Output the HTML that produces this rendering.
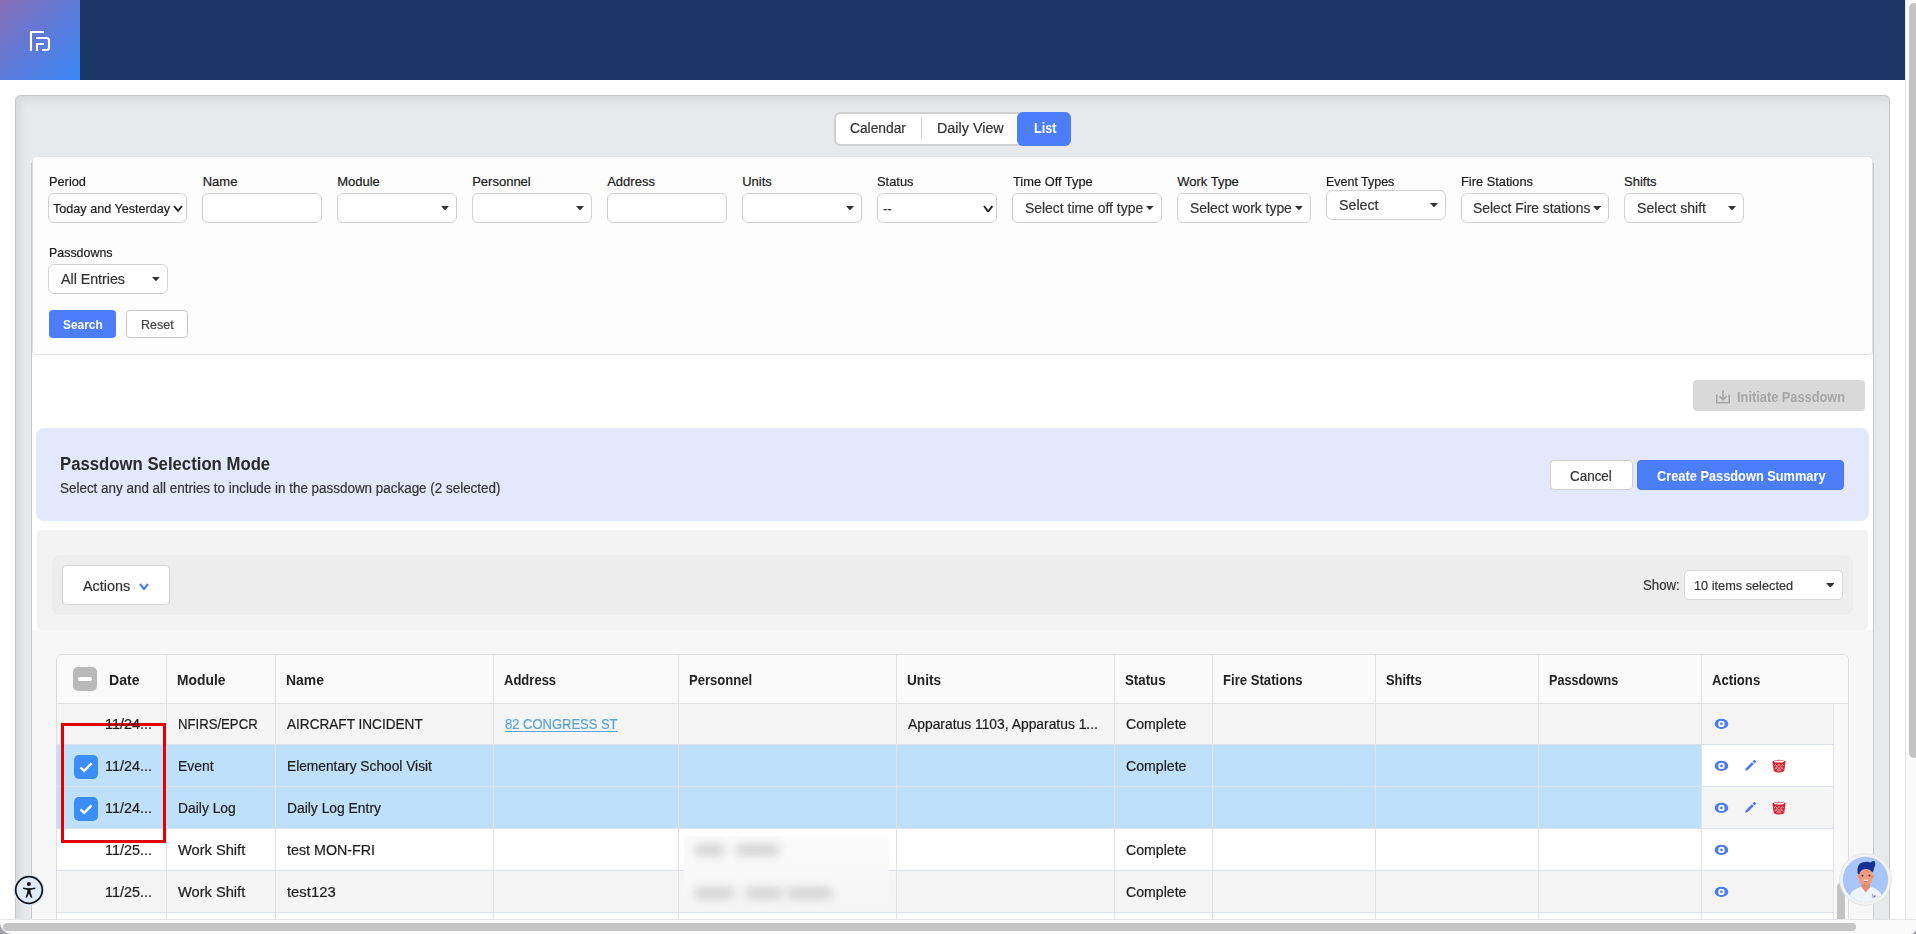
<!DOCTYPE html>
<html><head><meta charset="utf-8"><title>Passdown</title>
<style>
*{box-sizing:border-box;margin:0;padding:0}
html,body{width:1916px;height:934px;overflow:hidden;background:#fff;font-family:"Liberation Sans",sans-serif;color:#222;position:relative}
.a{position:absolute}
.t{position:absolute;white-space:nowrap;line-height:1;transform-origin:0 0}
</style></head><body>

<div class="a" style="left:0px;top:0px;width:1905px;height:80px;background:#1b3665"></div>
<div class="a" style="left:0px;top:0px;width:80px;height:80px;background:linear-gradient(135deg,#8a6fb8 0%,#5d7ad9 50%,#3a88f8 100%)"></div>
<svg class="a" style="left:0;top:0" width="80" height="80" viewBox="0 0 80 80"><g fill="none" stroke="#fff" stroke-width="2.1">
<path d="M31 51V32H44"/><path d="M36 38H46.5Q49 38 49 40.5V47.5Q49 50 46.5 50H42"/><path d="M37 51V44H44"/></g></svg>
<div class="a" style="left:15px;top:95px;width:1875px;height:905px;background:#e8e9ed;border:1px solid #c6c6c6;border-radius:5px;box-shadow:inset 4px 4px 7px rgba(0,0,0,.07)"></div>
<div class="a" style="left:31px;top:163px;width:1843px;height:837px;background:#fff;border-left:1px solid #c9c9c9;border-right:1px solid #c9c9c9"></div>
<div class="a" style="left:834px;top:112px;width:237px;height:34px;background:#fff;border:2px solid #d0d0d0;border-radius:6px"></div>
<div class="a" style="left:921px;top:117px;width:1px;height:23px;background:#d4d4d4"></div>
<div class="a" style="left:1017px;top:112px;width:54px;height:34px;background:#4d7efa;border-radius:6px"></div>
<div class="a" style="left:32px;top:156px;width:1841px;height:199px;background:#fdfdfd;border:1px solid #e0e0e0;border-radius:4px"></div>
<div class="a" style="left:48px;top:193px;width:139px;height:30px;background:#fff;border:1px solid #d0d0d0;border-radius:6px"></div>
<svg class="a" style="left:172.8px;top:204.8px" width="10.0" height="6.799999999999983" viewBox="-1 -1 10.0 6.799999999999983"><path d="M0 0L4.0 4.799999999999983L8.0 0" fill="none" stroke="#222" stroke-width="1.9"/></svg>
<div class="a" style="left:202px;top:193px;width:120px;height:30px;background:#fff;border:1px solid #d0d0d0;border-radius:6px"></div>
<div class="a" style="left:337px;top:193px;width:120px;height:30px;background:#fff;border:1px solid #d0d0d0;border-radius:6px"></div>
<svg class="a" style="left:441px;top:205.5px" width="8" height="4.4" viewBox="0 0 8 4.4"><path d="M0 0H8L4.0 4.4Z" fill="#333"/></svg>
<div class="a" style="left:472px;top:193px;width:120px;height:30px;background:#fff;border:1px solid #d0d0d0;border-radius:6px"></div>
<svg class="a" style="left:576px;top:205.5px" width="8" height="4.4" viewBox="0 0 8 4.4"><path d="M0 0H8L4.0 4.4Z" fill="#333"/></svg>
<div class="a" style="left:607px;top:193px;width:120px;height:30px;background:#fff;border:1px solid #d0d0d0;border-radius:6px"></div>
<div class="a" style="left:742px;top:193px;width:120px;height:30px;background:#fff;border:1px solid #d0d0d0;border-radius:6px"></div>
<svg class="a" style="left:846px;top:205.5px" width="8" height="4.4" viewBox="0 0 8 4.4"><path d="M0 0H8L4.0 4.4Z" fill="#333"/></svg>
<div class="a" style="left:877px;top:193px;width:120px;height:30px;background:#fff;border:1px solid #d0d0d0;border-radius:6px"></div>
<svg class="a" style="left:983px;top:204.6px" width="10.299999999999955" height="7.599999999999994" viewBox="-1 -1 10.299999999999955 7.599999999999994"><path d="M0 0L4.149999999999977 5.599999999999994L8.299999999999955 0" fill="none" stroke="#222" stroke-width="1.9"/></svg>
<div class="a" style="left:1012px;top:193px;width:150px;height:30px;background:#fff;border:1px solid #d0d0d0;border-radius:6px"></div>
<svg class="a" style="left:1146.4px;top:205.71000000000004px" width="7.599999999999909" height="4.17999999999995" viewBox="0 0 7.599999999999909 4.17999999999995"><path d="M0 0H7.599999999999909L3.7999999999999545 4.17999999999995Z" fill="#333"/></svg>
<div class="a" style="left:1177px;top:193px;width:134px;height:30px;background:#fff;border:1px solid #d0d0d0;border-radius:6px"></div>
<svg class="a" style="left:1295.4px;top:205.62750000000005px" width="7.899999999999864" height="4.344999999999925" viewBox="0 0 7.899999999999864 4.344999999999925"><path d="M0 0H7.899999999999864L3.949999999999932 4.344999999999925Z" fill="#333"/></svg>
<div class="a" style="left:1326px;top:190px;width:120px;height:30px;background:#fff;border:1px solid #d0d0d0;border-radius:6px"></div>
<svg class="a" style="left:1430px;top:202.60000000000002px" width="8" height="4.4" viewBox="0 0 8 4.4"><path d="M0 0H8L4.0 4.4Z" fill="#333"/></svg>
<div class="a" style="left:1461px;top:193px;width:148px;height:30px;background:#fff;border:1px solid #d0d0d0;border-radius:6px"></div>
<svg class="a" style="left:1592.7px;top:205.545px" width="8.200000000000045" height="4.5100000000000255" viewBox="0 0 8.200000000000045 4.5100000000000255"><path d="M0 0H8.200000000000045L4.100000000000023 4.5100000000000255Z" fill="#333"/></svg>
<div class="a" style="left:1624px;top:193px;width:120px;height:30px;background:#fff;border:1px solid #d0d0d0;border-radius:6px"></div>
<svg class="a" style="left:1727.5px;top:205.60000000000002px" width="8.0" height="4.4" viewBox="0 0 8.0 4.4"><path d="M0 0H8.0L4.0 4.4Z" fill="#333"/></svg>
<div class="a" style="left:48px;top:264px;width:120px;height:30px;background:#fff;border:1px solid #d0d0d0;border-radius:6px"></div>
<svg class="a" style="left:152px;top:276.65500000000003px" width="7.800000000000011" height="4.290000000000006" viewBox="0 0 7.800000000000011 4.290000000000006"><path d="M0 0H7.800000000000011L3.9000000000000057 4.290000000000006Z" fill="#333"/></svg>
<div class="a" style="left:49px;top:310px;width:67px;height:28px;background:#4d7efa;border-radius:4px"></div>
<div class="a" style="left:126px;top:310px;width:62px;height:28px;background:#fff;border:1px solid #c8c8c8;border-radius:4px"></div>
<div class="a" style="left:1693px;top:380px;width:172px;height:31px;background:#d9d9d9;border-radius:4px"></div>
<svg class="a" style="left:1714px;top:389px" width="18" height="16" viewBox="0 0 18 16"><g fill="none" stroke="#a6a6a6" stroke-width="1.6"><path d="M2.8 5.5V13.8H15.2V5.5"/><path d="M9 1.2V10.5"/><path d="M5.6 7.4L9 10.6L12.4 7.4"/></g></svg>
<div class="a" style="left:36px;top:428px;width:1833px;height:93px;background:#e4e8fc;border-radius:8px"></div>
<div class="a" style="left:1550px;top:460px;width:83px;height:30px;background:#fff;border:1px solid #cfcfcf;border-radius:4px"></div>
<div class="a" style="left:1637px;top:460px;width:207px;height:30px;background:#4d7efa;border-radius:4px;border:1px solid #4a78ee"></div>
<div class="a" style="left:37px;top:530px;width:1831px;height:100px;background:#f3f3f3;border-radius:4px"></div>
<div class="a" style="left:52px;top:555px;width:1801px;height:60px;background:#ededed;border-radius:8px"></div>
<div class="a" style="left:62px;top:565px;width:108px;height:40px;background:#fff;border:1px solid #d4d4d4;border-radius:4px"></div>
<svg class="a" style="left:138.5px;top:582.6px" width="10.0" height="7.0" viewBox="-1 -1 10.0 7.0"><path d="M0 0L4.0 5.0L8.0 0" fill="none" stroke="#4d7efa" stroke-width="2.2"/></svg>
<div class="a" style="left:1684px;top:570px;width:159px;height:30px;background:#fff;border:1px solid #d8d8d8;border-radius:5px"></div>
<svg class="a" style="left:1825.5px;top:582.6075px" width="8.700000000000045" height="4.785000000000025" viewBox="0 0 8.700000000000045 4.785000000000025"><path d="M0 0H8.700000000000045L4.350000000000023 4.785000000000025Z" fill="#333"/></svg>
<div class="a" style="left:32px;top:630px;width:1841px;height:370px;background:#f7f7f7"></div>
<div class="a" style="left:56px;top:654px;width:1793px;height:346px;background:#fff;border:1px solid #dedede;border-radius:6px 6px 0 0"></div>
<div class="a" style="left:57px;top:655px;width:1791px;height:48px;background:#fafafa;border-radius:5px 5px 0 0"></div>
<div class="a" style="left:57px;top:703px;width:1791px;height:1px;background:#e2e2e2"></div>
<div class="a" style="left:57px;top:704px;width:1645px;height:40px;background:#f5f5f5"></div>
<div class="a" style="left:1702px;top:704px;width:131px;height:40px;background:#f5f5f5"></div>
<div class="a" style="left:57px;top:745px;width:1645px;height:41px;background:#bee0fa"></div>
<div class="a" style="left:1702px;top:745px;width:131px;height:41px;background:#ffffff"></div>
<div class="a" style="left:57px;top:744px;width:1776px;height:1px;background:#dbe2ed"></div>
<div class="a" style="left:57px;top:787px;width:1645px;height:41px;background:#bee0fa"></div>
<div class="a" style="left:1702px;top:787px;width:131px;height:41px;background:#f5f5f5"></div>
<div class="a" style="left:57px;top:786px;width:1776px;height:1px;background:#dbe2ed"></div>
<div class="a" style="left:57px;top:829px;width:1645px;height:41px;background:#ffffff"></div>
<div class="a" style="left:1702px;top:829px;width:131px;height:41px;background:#ffffff"></div>
<div class="a" style="left:57px;top:828px;width:1776px;height:1px;background:#dbe2ed"></div>
<div class="a" style="left:57px;top:871px;width:1645px;height:41px;background:#f5f5f5"></div>
<div class="a" style="left:1702px;top:871px;width:131px;height:41px;background:#f5f5f5"></div>
<div class="a" style="left:57px;top:870px;width:1776px;height:1px;background:#dbe2ed"></div>
<div class="a" style="left:57px;top:913px;width:1645px;height:47px;background:#ffffff"></div>
<div class="a" style="left:1702px;top:913px;width:131px;height:47px;background:#ffffff"></div>
<div class="a" style="left:57px;top:912px;width:1776px;height:1px;background:#dbe2ed"></div>
<div class="a" style="left:166px;top:655px;width:1px;height:345px;background:#e2e2e2"></div>
<div class="a" style="left:275px;top:655px;width:1px;height:345px;background:#e2e2e2"></div>
<div class="a" style="left:493px;top:655px;width:1px;height:345px;background:#e2e2e2"></div>
<div class="a" style="left:678px;top:655px;width:1px;height:345px;background:#e2e2e2"></div>
<div class="a" style="left:896px;top:655px;width:1px;height:345px;background:#e2e2e2"></div>
<div class="a" style="left:1114px;top:655px;width:1px;height:345px;background:#e2e2e2"></div>
<div class="a" style="left:1212px;top:655px;width:1px;height:345px;background:#e2e2e2"></div>
<div class="a" style="left:1375px;top:655px;width:1px;height:345px;background:#e2e2e2"></div>
<div class="a" style="left:1538px;top:655px;width:1px;height:345px;background:#e2e2e2"></div>
<div class="a" style="left:1701px;top:655px;width:1px;height:345px;background:#e2e2e2"></div>
<div class="a" style="left:1833px;top:704px;width:15px;height:296px;background:#f9f9f9;border-left:1px solid #e6e6e6"></div>
<div class="a" style="left:1837px;top:883px;width:8px;height:117px;background:#c3c3c3;border-radius:4px 4px 0 0"></div>
<div class="a" style="left:73px;top:667px;width:24px;height:24px;background:#b9b9b9;border-radius:5px"></div>
<div class="a" style="left:78px;top:677px;width:14px;height:4px;background:#fff;border-radius:2px"></div>
<div class="a" style="left:74px;top:755px;width:24px;height:24px;background:#3b8ef5;border-radius:5px"></div>
<svg class="a" style="left:74px;top:755px" width="24" height="24" viewBox="0 0 24 24"><path d="M6.5 12.3L10.2 15.8L17.5 8.3" fill="none" stroke="#fff" stroke-width="2.4"/></svg>
<div class="a" style="left:74px;top:797px;width:24px;height:24px;background:#3b8ef5;border-radius:5px"></div>
<svg class="a" style="left:74px;top:797px" width="24" height="24" viewBox="0 0 24 24"><path d="M6.5 12.3L10.2 15.8L17.5 8.3" fill="none" stroke="#fff" stroke-width="2.4"/></svg>
<div class="a" style="left:684px;top:836px;width:205px;height:69px;background:linear-gradient(#fbfbfb,#f6f6f6)"></div>
<div class="a" style="left:694px;top:844px;width:31px;height:12px;background:#d4d4d4;border-radius:6px;filter:blur(5px)"></div>
<div class="a" style="left:735px;top:844px;width:45px;height:12px;background:#d4d4d4;border-radius:6px;filter:blur(5px)"></div>
<div class="a" style="left:694px;top:886.7px;width:41px;height:12px;background:#d4d4d4;border-radius:6px;filter:blur(5px)"></div>
<div class="a" style="left:745px;top:886.7px;width:38px;height:12px;background:#d4d4d4;border-radius:6px;filter:blur(5px)"></div>
<div class="a" style="left:786px;top:886.7px;width:47px;height:12px;background:#d4d4d4;border-radius:6px;filter:blur(5px)"></div>
<svg class="a" style="left:1714px;top:718.2px" width="15" height="12" viewBox="0 0 15 12"><ellipse cx="7.45" cy="5.9" rx="6.8" ry="5.1" fill="#4a7af5"/><circle cx="7.45" cy="5.9" r="3.2" fill="#fff"/><circle cx="7.45" cy="5.9" r="1.35" fill="#4a7af5"/></svg>
<svg class="a" style="left:1714px;top:760.2px" width="15" height="12" viewBox="0 0 15 12"><ellipse cx="7.45" cy="5.9" rx="6.8" ry="5.1" fill="#4a7af5"/><circle cx="7.45" cy="5.9" r="3.2" fill="#fff"/><circle cx="7.45" cy="5.9" r="1.35" fill="#4a7af5"/></svg>
<svg class="a" style="left:1744px;top:760.2px" width="13" height="12" viewBox="0 0 13 12"><path d="M1.2 10.8L1.9 8.2L7.9 2.2L9.8 4.1L3.8 10.1Z" fill="#4a7af5"/><path d="M8.6 1.5L10 0.1Q10.5 -0.3 11 0.2L12 1.2Q12.4 1.7 12 2.1L10.5 3.4Z" fill="#4a7af5"/></svg>
<svg class="a" style="left:1772px;top:759.2px" width="14" height="14" viewBox="0 0 14 14"><path d="M0.4 2.2Q7 -0.8 13.6 2.2L12.2 12.2Q7 14.6 1.8 12.2Z" fill="#d9202f"/><ellipse cx="7" cy="2.5" rx="5" ry="1.05" fill="#fff"/><g stroke="#f3b9be" stroke-width=".75" fill="none"><path d="M3 5L9.5 12.2M6.5 5L11.5 10.5M10 5L11.8 7M3.8 8.5L7 12.2M11 5L4.5 12.2M7.5 5L2.6 10.4M4 5L2.2 7M10.2 8.5L7 12.2"/></g></svg>
<svg class="a" style="left:1714px;top:802.2px" width="15" height="12" viewBox="0 0 15 12"><ellipse cx="7.45" cy="5.9" rx="6.8" ry="5.1" fill="#4a7af5"/><circle cx="7.45" cy="5.9" r="3.2" fill="#fff"/><circle cx="7.45" cy="5.9" r="1.35" fill="#4a7af5"/></svg>
<svg class="a" style="left:1744px;top:802.2px" width="13" height="12" viewBox="0 0 13 12"><path d="M1.2 10.8L1.9 8.2L7.9 2.2L9.8 4.1L3.8 10.1Z" fill="#4a7af5"/><path d="M8.6 1.5L10 0.1Q10.5 -0.3 11 0.2L12 1.2Q12.4 1.7 12 2.1L10.5 3.4Z" fill="#4a7af5"/></svg>
<svg class="a" style="left:1772px;top:801.2px" width="14" height="14" viewBox="0 0 14 14"><path d="M0.4 2.2Q7 -0.8 13.6 2.2L12.2 12.2Q7 14.6 1.8 12.2Z" fill="#d9202f"/><ellipse cx="7" cy="2.5" rx="5" ry="1.05" fill="#fff"/><g stroke="#f3b9be" stroke-width=".75" fill="none"><path d="M3 5L9.5 12.2M6.5 5L11.5 10.5M10 5L11.8 7M3.8 8.5L7 12.2M11 5L4.5 12.2M7.5 5L2.6 10.4M4 5L2.2 7M10.2 8.5L7 12.2"/></g></svg>
<svg class="a" style="left:1714px;top:844.2px" width="15" height="12" viewBox="0 0 15 12"><ellipse cx="7.45" cy="5.9" rx="6.8" ry="5.1" fill="#4a7af5"/><circle cx="7.45" cy="5.9" r="3.2" fill="#fff"/><circle cx="7.45" cy="5.9" r="1.35" fill="#4a7af5"/></svg>
<svg class="a" style="left:1714px;top:886.2px" width="15" height="12" viewBox="0 0 15 12"><ellipse cx="7.45" cy="5.9" rx="6.8" ry="5.1" fill="#4a7af5"/><circle cx="7.45" cy="5.9" r="3.2" fill="#fff"/><circle cx="7.45" cy="5.9" r="1.35" fill="#4a7af5"/></svg>
<div class="a" style="left:61px;top:723px;width:105px;height:120px;border:3px solid #e30000"></div>
<div class="a" style="left:0px;top:922px;width:14px;height:12px;background:#a3a3a8"></div>
<div class="a" style="left:1904px;top:926px;width:12px;height:8px;background:#8f8f94"></div>
<div class="a" style="left:0px;top:919px;width:1916px;height:15px;background:#fafafa;border-top:1px solid #e4e4e4;border-bottom-left-radius:12px;border-bottom-right-radius:5px"></div>
<div class="a" style="left:3px;top:923px;width:1853px;height:8px;background:#c4c4c4;border-radius:4px"></div>
<div class="a" style="left:1905px;top:0px;width:11px;height:919px;background:#fafafa;border-left:1px solid #e6e6e6"></div>
<div class="a" style="left:1909px;top:3px;width:10px;height:755px;background:#c4c4c4;border-radius:5px"></div>
<svg class="a" style="left:13px;top:874px" width="32" height="32" viewBox="0 0 32 32">
<circle cx="16" cy="16" r="15.6" fill="#dfeafc"/><circle cx="16" cy="16" r="13.3" fill="#dfeafc" stroke="#151515" stroke-width="1.7"/>
<circle cx="15.9" cy="9.9" r="2" fill="#151515"/>
<path d="M10 13.6Q16 14.8 22.3 13.6L22.3 14.9Q18.5 15.6 17.6 15.9L17.6 18.2L19.4 23.4L17.9 23.8L15.9 19.4L14 23.8L12.5 23.4L14.3 18.2L14.3 15.9Q13.4 15.6 10 14.9Z" fill="#151515"/>
</svg>
<svg class="a" style="left:1839px;top:853px" width="53" height="53" viewBox="0 0 53 53">
<defs><clipPath id="cp"><circle cx="26.5" cy="26.5" r="22.7"/></clipPath></defs>
<circle cx="26.5" cy="26.5" r="25.9" fill="#f3f3f3" stroke="#e0e0e0" stroke-width="0.8"/>
<circle cx="26.5" cy="26.5" r="22.7" fill="#a9c6fb"/>
<g clip-path="url(#cp)">
<path d="M8 53Q9 39 18 35.5L22.5 33.5L27 39L31.5 33.5L36 35.5Q44 39 45 53Z" fill="#eef4fe"/>
<path d="M22.5 29H31V34L26.8 39.5L22.5 34Z" fill="#e88a6f"/>
<ellipse cx="19.8" cy="23.5" rx="1.3" ry="2" fill="#ec9478"/><ellipse cx="33.6" cy="23.5" rx="1.3" ry="2" fill="#ec9478"/>
<path d="M19.8 19Q20 15.5 26.5 15.5Q33.3 15.5 33.3 19V26Q33.3 31.5 26.5 31.5Q19.8 31.5 19.8 26Z" fill="#f09b7f"/>
<path d="M18.6 20.5Q17.2 11 24 9.3Q28 8.2 31.5 9.4Q33.5 7.2 35.6 8.2Q37.2 11 35.2 14.5Q34.8 18 33.3 19.5Q31.5 15.6 26 16Q21.5 16.3 20.2 21.5Z" fill="#143095"/>
<rect x="22.6" y="21.8" width="1.7" height="1.6" fill="#3a2a2a"/><rect x="29.6" y="21.8" width="1.7" height="1.6" fill="#3a2a2a"/>
<path d="M24.6 27.3H29" stroke="#fff" stroke-width="1.1"/><path d="M25 28.6H28.6" stroke="#d9534f" stroke-width=".8"/>
<path d="M33.5 41.5Q32.8 44 34.5 45" stroke="#e57373" stroke-width=".9" fill="none"/><rect x="34.6" y="42.5" width="1.8" height="1.8" fill="#3a6ee8"/>
</g></svg>
<div class="t" id="t0" style="left:850px;top:121.25px;font-size:14px;font-weight:400;color:#333;transform:scaleX(0.9846);-webkit-text-stroke:0.2px #333;">Calendar</div>
<div class="t" id="t1" style="left:937px;top:121.25px;font-size:14px;font-weight:400;color:#333;transform:scaleX(1.0249);-webkit-text-stroke:0.2px #333;">Daily View</div>
<div class="t" id="t2" style="left:1033.5px;top:121.25px;font-size:14px;font-weight:700;color:#fff;transform:scaleX(0.9048);">List</div>
<div class="t" id="t3" style="left:48.7px;top:175.00px;font-size:13px;font-weight:400;color:#1a1a1a;transform:scaleX(0.9826);-webkit-text-stroke:0.2px #1a1a1a;">Period</div>
<div class="t" id="t4" style="left:202.7px;top:175.00px;font-size:13px;font-weight:400;color:#1a1a1a;-webkit-text-stroke:0.2px #1a1a1a;">Name</div>
<div class="t" id="t5" style="left:337.2px;top:175.00px;font-size:13px;font-weight:400;color:#1a1a1a;-webkit-text-stroke:0.2px #1a1a1a;">Module</div>
<div class="t" id="t6" style="left:472.2px;top:175.00px;font-size:13px;font-weight:400;color:#1a1a1a;-webkit-text-stroke:0.2px #1a1a1a;">Personnel</div>
<div class="t" id="t7" style="left:607.2px;top:175.00px;font-size:13px;font-weight:400;color:#1a1a1a;-webkit-text-stroke:0.2px #1a1a1a;">Address</div>
<div class="t" id="t8" style="left:742.2px;top:175.00px;font-size:13px;font-weight:400;color:#1a1a1a;-webkit-text-stroke:0.2px #1a1a1a;">Units</div>
<div class="t" id="t9" style="left:877.2px;top:175.00px;font-size:13px;font-weight:400;color:#1a1a1a;transform:scaleX(0.9903);-webkit-text-stroke:0.2px #1a1a1a;">Status</div>
<div class="t" id="t10" style="left:1012.6px;top:175.00px;font-size:13px;font-weight:400;color:#1a1a1a;transform:scaleX(0.9881);-webkit-text-stroke:0.2px #1a1a1a;">Time Off Type</div>
<div class="t" id="t11" style="left:1177.2px;top:175.00px;font-size:13px;font-weight:400;color:#1a1a1a;-webkit-text-stroke:0.2px #1a1a1a;">Work Type</div>
<div class="t" id="t12" style="left:1326.4px;top:175.00px;font-size:13px;font-weight:400;color:#1a1a1a;transform:scaleX(0.9583);-webkit-text-stroke:0.2px #1a1a1a;">Event Types</div>
<div class="t" id="t13" style="left:1461.3px;top:175.00px;font-size:13px;font-weight:400;color:#1a1a1a;transform:scaleX(0.9868);-webkit-text-stroke:0.2px #1a1a1a;">Fire Stations</div>
<div class="t" id="t14" style="left:1624px;top:175.00px;font-size:13px;font-weight:400;color:#1a1a1a;-webkit-text-stroke:0.2px #1a1a1a;">Shifts</div>
<div class="t" id="t15" style="left:53px;top:201.80px;font-size:13px;font-weight:400;color:#1e1e1e;transform:scaleX(0.9706);-webkit-text-stroke:0.2px #1e1e1e;">Today and Yesterday</div>
<div class="t" id="t16" style="left:883px;top:201.80px;font-size:13px;font-weight:400;color:#333;-webkit-text-stroke:0.2px #333;">--</div>
<div class="t" id="t17" style="left:1025px;top:201.45px;font-size:14px;font-weight:400;color:#333;transform:scaleX(0.9943);-webkit-text-stroke:0.2px #333;">Select time off type</div>
<div class="t" id="t18" style="left:1190px;top:201.45px;font-size:14px;font-weight:400;color:#333;transform:scaleX(0.9915);-webkit-text-stroke:0.2px #333;">Select work type</div>
<div class="t" id="t19" style="left:1339px;top:198.25px;font-size:14px;font-weight:400;color:#333;transform:scaleX(1.0159);-webkit-text-stroke:0.2px #333;">Select</div>
<div class="t" id="t20" style="left:1473.2px;top:201.45px;font-size:14px;font-weight:400;color:#333;transform:scaleX(0.9859);-webkit-text-stroke:0.2px #333;">Select Fire stations</div>
<div class="t" id="t21" style="left:1636.7px;top:201.45px;font-size:14px;font-weight:400;color:#333;transform:scaleX(1.0076);-webkit-text-stroke:0.2px #333;">Select shift</div>
<div class="t" id="t22" style="left:48.5px;top:245.90px;font-size:13px;font-weight:400;color:#1a1a1a;transform:scaleX(0.9552);-webkit-text-stroke:0.2px #1a1a1a;">Passdowns</div>
<div class="t" id="t23" style="left:60.8px;top:272.45px;font-size:14px;font-weight:400;color:#333;transform:scaleX(1.0146);-webkit-text-stroke:0.2px #333;">All Entries</div>
<div class="t" id="t24" style="left:63px;top:317.80px;font-size:13px;font-weight:700;color:#fff;transform:scaleX(0.9172);">Search</div>
<div class="t" id="t25" style="left:141.2px;top:317.80px;font-size:13px;font-weight:400;color:#444;transform:scaleX(0.9600);-webkit-text-stroke:0.2px #444;">Reset</div>
<div class="t" id="t26" style="left:1736.5px;top:390.05px;font-size:14px;font-weight:700;color:#a6a6a6;transform:scaleX(0.9146);">Initiate Passdown</div>
<div class="t" id="t27" style="left:60.2px;top:454.96px;font-size:18px;font-weight:700;color:#2a2a2a;transform:scaleX(0.9298);">Passdown Selection Mode</div>
<div class="t" id="t28" style="left:60.2px;top:480.95px;font-size:14px;font-weight:400;color:#333;transform:scaleX(0.9593);-webkit-text-stroke:0.2px #333;">Select any and all entries to include in the passdown package (2 selected)</div>
<div class="t" id="t29" style="left:1570.1px;top:469.45px;font-size:14px;font-weight:400;color:#333;transform:scaleX(0.9595);-webkit-text-stroke:0.2px #333;">Cancel</div>
<div class="t" id="t30" style="left:1656.8px;top:469.45px;font-size:14px;font-weight:700;color:#fff;transform:scaleX(0.9142);">Create Passdown Summary</div>
<div class="t" id="t31" style="left:83.2px;top:578.95px;font-size:14px;font-weight:400;color:#333;transform:scaleX(1.0287);-webkit-text-stroke:0.2px #333;">Actions</div>
<div class="t" id="t32" style="left:1643px;top:578.15px;font-size:14px;font-weight:400;color:#333;transform:scaleX(0.9441);-webkit-text-stroke:0.2px #333;">Show:</div>
<div class="t" id="t33" style="left:1693.8px;top:579.00px;font-size:13px;font-weight:400;color:#333;transform:scaleX(0.9796);-webkit-text-stroke:0.2px #333;">10 items selected</div>
<div class="t" id="t34" style="left:109.3px;top:672.10px;font-size:15px;font-weight:700;color:#222;transform:scaleX(0.9394);">Date</div>
<div class="t" id="t35" style="left:177.2px;top:672.10px;font-size:15px;font-weight:700;color:#222;transform:scaleX(0.9226);">Module</div>
<div class="t" id="t36" style="left:286.2px;top:672.10px;font-size:15px;font-weight:700;color:#222;transform:scaleX(0.9268);">Name</div>
<div class="t" id="t37" style="left:504.4px;top:672.10px;font-size:15px;font-weight:700;color:#222;transform:scaleX(0.8683);">Address</div>
<div class="t" id="t38" style="left:689.1px;top:672.10px;font-size:15px;font-weight:700;color:#222;transform:scaleX(0.8712);">Personnel</div>
<div class="t" id="t39" style="left:907px;top:672.10px;font-size:15px;font-weight:700;color:#222;transform:scaleX(0.9105);">Units</div>
<div class="t" id="t40" style="left:1125.3px;top:672.10px;font-size:15px;font-weight:700;color:#222;transform:scaleX(0.8848);">Status</div>
<div class="t" id="t41" style="left:1223.2px;top:672.10px;font-size:15px;font-weight:700;color:#222;transform:scaleX(0.8747);">Fire Stations</div>
<div class="t" id="t42" style="left:1386.3px;top:672.10px;font-size:15px;font-weight:700;color:#222;transform:scaleX(0.8595);">Shifts</div>
<div class="t" id="t43" style="left:1549.4px;top:672.10px;font-size:15px;font-weight:700;color:#222;transform:scaleX(0.8386);">Passdowns</div>
<div class="t" id="t44" style="left:1712.4px;top:672.10px;font-size:15px;font-weight:700;color:#222;transform:scaleX(0.8764);">Actions</div>
<div class="t" id="t45" style="left:105.1px;top:717.25px;font-size:14px;font-weight:400;color:#1c1c1c;transform:scaleX(1.0287);-webkit-text-stroke:0.2px #1c1c1c;">11/24...</div>
<div class="t" id="t46" style="left:178.3px;top:717.25px;font-size:14px;font-weight:400;color:#1c1c1c;transform:scaleX(0.9391);-webkit-text-stroke:0.2px #1c1c1c;">NFIRS/EPCR</div>
<div class="t" id="t47" style="left:287px;top:717.25px;font-size:14px;font-weight:400;color:#1c1c1c;transform:scaleX(0.9709);-webkit-text-stroke:0.2px #1c1c1c;">AIRCRAFT INCIDENT</div>
<div class="t" id="t48" style="left:504.9px;top:717.25px;font-size:14px;font-weight:400;color:#5ba2d9;transform:scaleX(0.9274);-webkit-text-stroke:0.2px #5ba2d9;text-decoration:underline;text-underline-offset:2px">82 CONGRESS ST</div>
<div class="t" id="t49" style="left:908px;top:717.25px;font-size:14px;font-weight:400;color:#1c1c1c;transform:scaleX(0.9892);-webkit-text-stroke:0.2px #1c1c1c;">Apparatus 1103, Apparatus 1...</div>
<div class="t" id="t50" style="left:1126.3px;top:717.25px;font-size:14px;font-weight:400;color:#1c1c1c;transform:scaleX(1.0087);-webkit-text-stroke:0.2px #1c1c1c;">Complete</div>
<div class="t" id="t51" style="left:105.1px;top:759.25px;font-size:14px;font-weight:400;color:#1c1c1c;transform:scaleX(1.0287);-webkit-text-stroke:0.2px #1c1c1c;">11/24...</div>
<div class="t" id="t52" style="left:178.3px;top:759.25px;font-size:14px;font-weight:400;color:#1c1c1c;transform:scaleX(0.9922);-webkit-text-stroke:0.2px #1c1c1c;">Event</div>
<div class="t" id="t53" style="left:287px;top:759.25px;font-size:14px;font-weight:400;color:#1c1c1c;transform:scaleX(0.9819);-webkit-text-stroke:0.2px #1c1c1c;">Elementary School Visit</div>
<div class="t" id="t54" style="left:1126.3px;top:759.25px;font-size:14px;font-weight:400;color:#1c1c1c;transform:scaleX(1.0087);-webkit-text-stroke:0.2px #1c1c1c;">Complete</div>
<div class="t" id="t55" style="left:105.1px;top:801.25px;font-size:14px;font-weight:400;color:#1c1c1c;transform:scaleX(1.0287);-webkit-text-stroke:0.2px #1c1c1c;">11/24...</div>
<div class="t" id="t56" style="left:178.3px;top:801.25px;font-size:14px;font-weight:400;color:#1c1c1c;transform:scaleX(0.9900);-webkit-text-stroke:0.2px #1c1c1c;">Daily Log</div>
<div class="t" id="t57" style="left:287px;top:801.25px;font-size:14px;font-weight:400;color:#1c1c1c;transform:scaleX(0.9897);-webkit-text-stroke:0.2px #1c1c1c;">Daily Log Entry</div>
<div class="t" id="t58" style="left:105.1px;top:843.25px;font-size:14px;font-weight:400;color:#1c1c1c;transform:scaleX(1.0287);-webkit-text-stroke:0.2px #1c1c1c;">11/25...</div>
<div class="t" id="t59" style="left:178.3px;top:843.25px;font-size:14px;font-weight:400;color:#1c1c1c;transform:scaleX(1.0456);-webkit-text-stroke:0.2px #1c1c1c;">Work Shift</div>
<div class="t" id="t60" style="left:287px;top:843.25px;font-size:14px;font-weight:400;color:#1c1c1c;transform:scaleX(1.0200);-webkit-text-stroke:0.2px #1c1c1c;">test MON-FRI</div>
<div class="t" id="t61" style="left:1126.3px;top:843.25px;font-size:14px;font-weight:400;color:#1c1c1c;transform:scaleX(1.0087);-webkit-text-stroke:0.2px #1c1c1c;">Complete</div>
<div class="t" id="t62" style="left:105.1px;top:885.25px;font-size:14px;font-weight:400;color:#1c1c1c;transform:scaleX(1.0287);-webkit-text-stroke:0.2px #1c1c1c;">11/25...</div>
<div class="t" id="t63" style="left:178.3px;top:885.25px;font-size:14px;font-weight:400;color:#1c1c1c;transform:scaleX(1.0456);-webkit-text-stroke:0.2px #1c1c1c;">Work Shift</div>
<div class="t" id="t64" style="left:287px;top:885.25px;font-size:14px;font-weight:400;color:#1c1c1c;transform:scaleX(1.0591);-webkit-text-stroke:0.2px #1c1c1c;">test123</div>
<div class="t" id="t65" style="left:1126.3px;top:885.25px;font-size:14px;font-weight:400;color:#1c1c1c;transform:scaleX(1.0087);-webkit-text-stroke:0.2px #1c1c1c;">Complete</div>
</body></html>
